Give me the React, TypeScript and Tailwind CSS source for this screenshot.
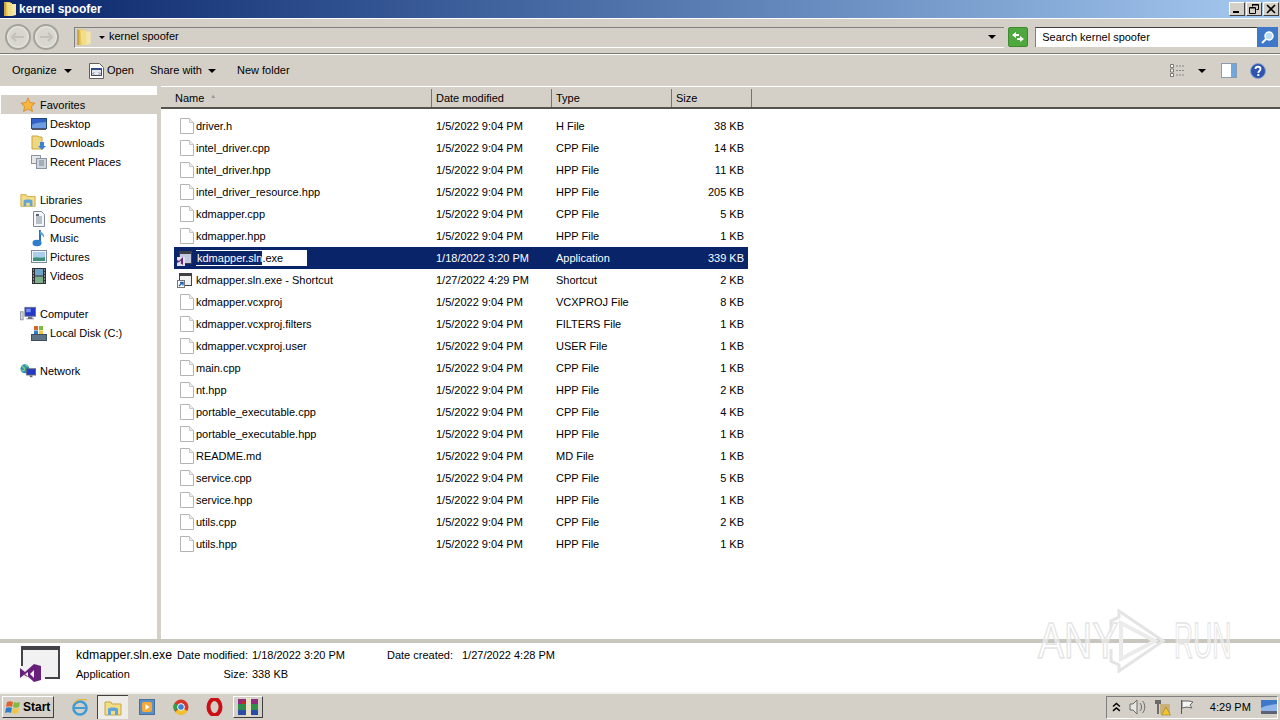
const FONT = "font-['Liberation_Sans',Arial,sans-serif]";

type FileRow = { name: string; date: string; type: string; size: string; kind?: "exe" | "lnk" };

const FILES: FileRow[] = [
  { name: "driver.h", date: "1/5/2022 9:04 PM", type: "H File", size: "38 KB" },
  { name: "intel_driver.cpp", date: "1/5/2022 9:04 PM", type: "CPP File", size: "14 KB" },
  { name: "intel_driver.hpp", date: "1/5/2022 9:04 PM", type: "HPP File", size: "11 KB" },
  { name: "intel_driver_resource.hpp", date: "1/5/2022 9:04 PM", type: "HPP File", size: "205 KB" },
  { name: "kdmapper.cpp", date: "1/5/2022 9:04 PM", type: "CPP File", size: "5 KB" },
  { name: "kdmapper.hpp", date: "1/5/2022 9:04 PM", type: "HPP File", size: "1 KB" },
  { name: "kdmapper.sln.exe", date: "1/18/2022 3:20 PM", type: "Application", size: "339 KB", kind: "exe" },
  { name: "kdmapper.sln.exe - Shortcut", date: "1/27/2022 4:29 PM", type: "Shortcut", size: "2 KB", kind: "lnk" },
  { name: "kdmapper.vcxproj", date: "1/5/2022 9:04 PM", type: "VCXPROJ File", size: "8 KB" },
  { name: "kdmapper.vcxproj.filters", date: "1/5/2022 9:04 PM", type: "FILTERS File", size: "1 KB" },
  { name: "kdmapper.vcxproj.user", date: "1/5/2022 9:04 PM", type: "USER File", size: "1 KB" },
  { name: "main.cpp", date: "1/5/2022 9:04 PM", type: "CPP File", size: "1 KB" },
  { name: "nt.hpp", date: "1/5/2022 9:04 PM", type: "HPP File", size: "2 KB" },
  { name: "portable_executable.cpp", date: "1/5/2022 9:04 PM", type: "CPP File", size: "4 KB" },
  { name: "portable_executable.hpp", date: "1/5/2022 9:04 PM", type: "HPP File", size: "1 KB" },
  { name: "README.md", date: "1/5/2022 9:04 PM", type: "MD File", size: "1 KB" },
  { name: "service.cpp", date: "1/5/2022 9:04 PM", type: "CPP File", size: "5 KB" },
  { name: "service.hpp", date: "1/5/2022 9:04 PM", type: "HPP File", size: "1 KB" },
  { name: "utils.cpp", date: "1/5/2022 9:04 PM", type: "CPP File", size: "2 KB" },
  { name: "utils.hpp", date: "1/5/2022 9:04 PM", type: "HPP File", size: "1 KB" },
];

function Folder({ size = 16 }: { size?: number }) {
  return (
    <svg width={size} height={size} viewBox="0 0 16 16">
      <path d="M1 1h6l1 1h1v13H1z" fill="#e8c860" />
      <path d="M9 3h4v11l-4 1z" fill="#f4e6a8" />
      <path d="M4 2h5v13H5z" fill="#f3de88" />
      <path d="M1 1v14h2V2z" fill="#c9a640" />
    </svg>
  );
}

function DocIcon() {
  return (
    <svg width="14" height="16" viewBox="0 0 14 16">
      <path d="M.5.5h9l4 4v11H.5z" fill="#fff" stroke="#b4b4b4" />
      <path d="M9.5.5v4h4" fill="#eee" stroke="#c8c8c8" />
    </svg>
  );
}

function WindowIcon({ kind }: { kind: "exe" | "lnk" }) {
  return (
    <svg width="16" height="16" viewBox="0 0 16 16">
      <rect x="2.5" y="1.5" width="12" height="12" fill={kind === "exe" ? "#c3c8dc" : "#f1f1f1"} stroke="#3f3f46" />
      <rect x="2" y="1" width="13" height="3" fill="#3f3f46" />
      {kind === "exe" ? (
        <>
          <rect x="0" y="7" width="8" height="9" fill="#dfe2ee" />
          <path d="M0 10l2 1 4-4v8l-4-3-2 1zM2 12.2l2 .8V10.4z" fill="#68217a" fillRule="evenodd" />
        </>
      ) : (
        <>
          <rect x="0.5" y="8.5" width="7" height="7" fill="#fff" stroke="#777" />
          <path d="M2 14l3-3M3 10.5h3v3" fill="none" stroke="#1a5fb4" strokeWidth="1.4" />
        </>
      )}
    </svg>
  );
}

function SideIcon({ name }: { name: string }) {
  switch (name) {
    case "Favorites":
      return (
        <svg width="18" height="18" viewBox="0 0 18 18">
          <path d="M9 1l2.4 5.3 5.6.6-4.2 3.8 1.2 5.6L9 13.4l-5 2.9 1.2-5.6L1 6.9l5.6-.6z" fill="#f6b73c" stroke="#d98a2a" />
        </svg>
      );
    case "Desktop":
      return (
        <svg width="16" height="16" viewBox="0 0 16 16">
          <rect x="0.5" y="2.5" width="15" height="10" fill="#2f62c4" stroke="#24477f" />
          <path d="M1 9c4-3 9-2 14-3v6H1z" fill="#6f9be0" />
          <rect x="1" y="12" width="14" height="2" fill="#4a5568" />
        </svg>
      );
    case "Downloads":
      return (
        <svg width="16" height="16" viewBox="0 0 16 16">
          <path d="M1 1h6l1 1h3v12H1z" fill="#efd77e" stroke="#c9a640" />
          <path d="M9 7h4v4h2l-4 4-4-4h2z" fill="#3b82d6" />
        </svg>
      );
    case "Recent Places":
      return (
        <svg width="16" height="16" viewBox="0 0 16 16">
          <rect x="0.5" y="1.5" width="9" height="8" fill="#e5e7eb" stroke="#8a94a0" />
          <rect x="5.5" y="4.5" width="10" height="10" fill="#cfd5dc" stroke="#8a94a0" />
          <path d="M8 7h5M8 9h5M8 11h5" stroke="#7a8490" />
        </svg>
      );
    case "Libraries":
      return (
        <svg width="18" height="16" viewBox="0 0 18 16">
          <path d="M1 2h6l1 2h9v11H1z" fill="#f2dc85" stroke="#c9a640" />
          <path d="M4 15V9c0-2 10-2 10 0v6h-3v-4H7v4z" fill="#5fa5d9" />
        </svg>
      );
    case "Documents":
      return (
        <svg width="14" height="16" viewBox="0 0 14 16">
          <path d="M1.5.5h8l3 3v12h-11z" fill="#f5f6f8" stroke="#7f8a99" />
          <path d="M4 6h6M4 8h6M4 10h6M4 12h6" stroke="#7f8a99" />
          <rect x="4" y="3" width="3" height="2" fill="#5a6778" />
        </svg>
      );
    case "Music":
      return (
        <svg width="14" height="18" viewBox="0 0 14 18">
          <path d="M8 1v12" stroke="#2a6fb8" strokeWidth="2" />
          <ellipse cx="5" cy="14" rx="4.5" ry="3.2" fill="#2f7cc8" />
          <path d="M8 1c1 3 5 3 4 8-1-3-3-3-4-4z" fill="#5aa2e0" />
        </svg>
      );
    case "Pictures":
      return (
        <svg width="16" height="14" viewBox="0 0 16 14">
          <rect x="0.5" y="0.5" width="15" height="12" fill="#f3f4f6" stroke="#7f8a99" />
          <rect x="2" y="2" width="12" height="9" fill="#a9cdea" />
          <path d="M2 8c4-2 8 1 12-1v4H2z" fill="#3f8f78" />
        </svg>
      );
    case "Videos":
      return (
        <svg width="14" height="16" viewBox="0 0 14 16">
          <rect width="14" height="16" fill="#2f3338" />
          <rect x="3" y="1" width="8" height="6.5" fill="#6fa3c7" />
          <rect x="3" y="8.5" width="8" height="6.5" fill="#7fae8b" />
          <path d="M1 2h1M1 5h1M1 8h1M1 11h1M1 14h1M12 2h1M12 5h1M12 8h1M12 11h1M12 14h1" stroke="#e5e7eb" />
        </svg>
      );
    case "Computer":
      return (
        <svg width="18" height="16" viewBox="0 0 18 16">
          <rect x="0.5" y="5.5" width="3" height="9" fill="#d8dade" stroke="#8a94a0" />
          <rect x="5.5" y="0.5" width="12" height="10" fill="#2438c8" stroke="#6b7280" />
          <path d="M7 2h5v4H7z" fill="#7b93ef" />
          <path d="M9 11h5v2h2v1H7v-1h2z" fill="#6b7280" />
        </svg>
      );
    case "Local Disk (C:)":
      return (
        <svg width="16" height="16" viewBox="0 0 16 16">
          <rect x="0.5" y="9.5" width="15" height="6" fill="#5f7487" stroke="#3f4e5c" />
          <rect x="3" y="1" width="4" height="4" fill="#e2622f" />
          <rect x="8" y="1" width="4" height="4" fill="#7fba3c" />
          <rect x="3" y="5.5" width="4" height="3.5" fill="#2f7cc8" />
          <rect x="8" y="5.5" width="4" height="3.5" fill="#f2c53d" />
        </svg>
      );
    default:
      return (
        <svg width="18" height="16" viewBox="0 0 18 16">
          <circle cx="5.5" cy="5.5" r="5" fill="#2c8fb8" />
          <path d="M2 3c2 0 3 1 3 3S3 8 2 7M6 1c1 2 3 2 4 2" stroke="#7fd07f" fill="none" strokeWidth="1.4" />
          <rect x="7.5" y="5.5" width="10" height="7" fill="#2438c8" stroke="#5b6470" />
          <path d="M11 13h3v2h-3z" fill="#5b6470" />
        </svg>
      );
  }
}

function NavRow({ name, sub, active }: { name: string; sub?: boolean; active?: boolean }) {
  return (
    <div className={`flex h-[19px] items-center pt-[1px] ${sub ? "pl-[30px] gap-[3px]" : "pl-[19px] gap-[4px]"} ${active ? "bg-[#d4d0c8]" : ""}`}>
      <span className="flex h-[17px] w-[16px] items-center justify-center overflow-visible">
        <SideIcon name={name} />
      </span>
      <span>{name}</span>
    </div>
  );
}

function Spacer() {
  return <div className="h-[19px]" />;
}

function NavPane() {
  return (
    <div className="w-[157px] shrink-0 bg-white pl-[1px] pt-[9px]">
      <NavRow name="Favorites" active />
      <NavRow name="Desktop" sub />
      <NavRow name="Downloads" sub />
      <NavRow name="Recent Places" sub />
      <Spacer />
      <NavRow name="Libraries" />
      <NavRow name="Documents" sub />
      <NavRow name="Music" sub />
      <NavRow name="Pictures" sub />
      <NavRow name="Videos" sub />
      <Spacer />
      <NavRow name="Computer" />
      <NavRow name="Local Disk (C:)" sub />
      <Spacer />
      <NavRow name="Network" />
    </div>
  );
}

function HeaderCell({ label, width, pad }: { label: string; width: string; pad: string }) {
  return (
    <div className={`flex h-full shrink-0 items-center border-r border-r-[#77746c] ${width} ${pad}`}>
      <span>{label}</span>
      {label === "Name" && <span className="mb-[3px] ml-[6px] text-[6px] text-[#9a978f]">▲</span>}
    </div>
  );
}

function Row({ file }: { file: FileRow }) {
  const selected = file.kind === "exe";
  return (
    <div className={`ml-[13px] flex h-[22px] w-[574px] items-center ${selected ? "bg-[#0a246a] text-white" : ""}`}>
      <span className={`flex shrink-0 items-center ${file.kind ? "ml-[3px] w-[19px]" : "ml-[6px] w-[16px]"}`}>
        {file.kind ? <WindowIcon kind={file.kind} /> : <DocIcon />}
      </span>
      {selected ? (
        <span className="flex h-[16px] w-[111px] shrink-0 items-center bg-white pt-[1px] text-black">
          <span className="-mt-[1px] flex h-[14px] items-center bg-[#0a246a] pl-[1px] pt-[1px] text-white">kdmapper.sln</span>
          <span>.exe</span>
        </span>
      ) : (
        <span className="w-[240px] shrink-0 whitespace-nowrap pt-[1px]">{file.name}</span>
      )}
      {selected && <span className="w-[129px] shrink-0" />}
      <span className="w-[120px] shrink-0 pt-[1px]">{file.date}</span>
      <span className="w-[120px] shrink-0 pt-[1px]">{file.type}</span>
      <span className="w-[68px] shrink-0 pt-[1px] text-right">{file.size}</span>
    </div>
  );
}

function WinButton({ glyph }: { glyph: "min" | "max" | "close" }) {
  return (
    <div className="flex h-[14px] w-[16px] items-center justify-center border border-b-[#404040] border-l-white border-r-[#404040] border-t-white bg-[#d4d0c8]">
      <svg width="10" height="10" viewBox="0 0 10 10">
        {glyph === "min" && <rect x="1" y="7" width="6" height="2" fill="#000" />}
        {glyph === "max" && <path d="M3.5 2.5V.5h6v5h-2M.5 3.5h6v6h-6zM3 1h6M1 4h5" fill="none" stroke="#000" />}
        {glyph === "close" && <path d="M1 1l8 8M9 1L1 9" stroke="#000" strokeWidth="1.6" />}
      </svg>
    </div>
  );
}

function RoundNav({ dir }: { dir: "left" | "right" }) {
  return (
    <div className="flex h-[26px] w-[26px] items-center justify-center rounded-full border-2 border-[#a5a29b] bg-[#d9d6cf] shadow-[inset_0_0_3px_#fff]">
      <svg width="14" height="10" viewBox="0 0 14 10">
        <path d={dir === "left" ? "M1 5h12M5 1L1 5l4 4" : "M1 5h12M9 1l4 4-4 4"} fill="none" stroke="#c4c1ba" strokeWidth="2" />
      </svg>
    </div>
  );
}

function Caret() {
  return <span className="block h-0 w-0 shrink-0 border-l-[4px] border-r-[4px] border-t-[4px] border-l-transparent border-r-transparent border-t-black" />;
}

function AddressBar() {
  return (
    <div className="mt-[2px] flex h-[32px] items-center pl-[5px] pr-[2px]">
      <RoundNav dir="left" />
      <div className="w-[2px]" />
      <RoundNav dir="right" />
      <div className="ml-[15px] flex h-[21px] w-[931px] items-center border-b border-l border-t border-b-white border-l-[#808080] border-t-[#808080]">
        <span className="ml-[1px] flex"><Folder size={18} /></span>
        <span className="ml-[5px] mr-[4px] block h-0 w-0 border-l-[3px] border-r-[3px] border-t-[3px] border-l-transparent border-r-transparent border-t-black" />
        <span className="-mt-[1px]">kernel spoofer</span>
        <span className="ml-auto mr-[8px] flex"><Caret /></span>
      </div>
      <div className="ml-[4px] flex h-[20px] w-[20px] items-center justify-center rounded-[2px] border border-[#3d8b2f] bg-[#4fa83d]">
        <svg width="14" height="12" viewBox="0 0 14 12">
          <path d="M1 4l4-3v2h3v2H5v2zM13 8L9 11V9H6V7h3V5z" fill="#fff" />
        </svg>
      </div>
      <div className="ml-[7px] flex h-[20px] w-[222px] items-center border-l border-t border-l-[#808080] border-t-[#404040] bg-white pl-[6px]">
        Search kernel spoofer
      </div>
      <div className="flex h-[20px] w-[21px] items-center justify-center bg-[#3f77c9]">
        <svg width="15" height="15" viewBox="0 0 15 15">
          <circle cx="9" cy="6" r="4" fill="#bcdcf5" stroke="#fff" strokeWidth="1.5" />
          <path d="M6 9l-4 4" stroke="#fff" strokeWidth="2" />
        </svg>
      </div>
    </div>
  );
}

function Toolbar() {
  return (
    <div className="flex h-[32px] items-center border-t border-t-white pl-[12px] pr-[14px]">
      <span className="w-[44px] whitespace-nowrap">Organize</span>
      <span className="ml-[8px] flex"><Caret /></span>
      <span className="ml-[17px] flex">
        <svg width="15" height="16" viewBox="0 0 15 16">
          <path d="M.5.5h10l4 4v11H.5z" fill="#fff" stroke="#606060" />
          <rect x="2.5" y="5.5" width="10" height="7" fill="#e5e7eb" stroke="#404a5a" />
          <rect x="2" y="5" width="11" height="2" fill="#2f4d8a" />
          <path d="M5 9.5l-1 1 1 1M10 9.5l1 1-1 1" stroke="#2f4d8a" fill="none" />
        </svg>
      </span>
      <span className="ml-[3px] w-[26px]">Open</span>
      <span className="ml-[17px] w-[51px] whitespace-nowrap">Share with</span>
      <span className="ml-[7px] flex"><Caret /></span>
      <span className="ml-[21px] whitespace-nowrap">New folder</span>
      <span className="ml-auto flex">
        <svg width="16" height="13" viewBox="0 0 16 13">
          <path d="M.5.5h3v3h-3zM.5 5h3v3h-3zM.5 9.5h3v3h-3z" fill="#fff" stroke="#7a776f" />
          <path d="M6 2h9M6 6.5h9M6 11h9" stroke="#8a8780" strokeDasharray="2 1" />
        </svg>
      </span>
      <span className="ml-[12px] flex"><Caret /></span>
      <span className="ml-[15px] flex">
        <svg width="16" height="15" viewBox="0 0 16 15">
          <rect x="0.5" y="0.5" width="15" height="14" fill="#fff" stroke="#8a9bb0" />
          <rect x="10" y="1" width="5" height="13" fill="#6fa8dc" />
        </svg>
      </span>
      <span className="ml-[13px] flex">
        <svg width="16" height="16" viewBox="0 0 16 16">
          <circle cx="8" cy="8" r="7.5" fill="#2c54b0" stroke="#8fa4cf" />
          <path d="M5.5 6c0-3 5-3 5 0 0 2-2.2 2-2.2 4" fill="none" stroke="#fff" strokeWidth="1.8" />
          <rect x="7.3" y="11" width="2" height="2" fill="#fff" />
        </svg>
      </span>
    </div>
  );
}

function FileList() {
  return (
    <div className="min-w-0 flex-1 bg-white">
      <div className="flex h-[23px] items-center border-b-2 border-t border-b-[#55534d] border-t-white bg-[#d4d0c8] pt-[2px]">
        <HeaderCell label="Name" width="w-[271px]" pad="pl-[14px]" />
        <HeaderCell label="Date modified" width="w-[120px]" pad="pl-[4px]" />
        <HeaderCell label="Type" width="w-[120px]" pad="pl-[4px]" />
        <HeaderCell label="Size" width="w-[80px]" pad="pl-[4px]" />
      </div>
      <div className="pt-[6px]">
        {FILES.map((file) => (
          <Row key={file.name} file={file} />
        ))}
      </div>
    </div>
  );
}

function DetailsPane() {
  return (
    <div className="flex h-[53px] shrink-0 border-t-[4px] border-t-[#c9c6be] bg-white">
      <span className="ml-[20px] mt-[3px] flex shrink-0 self-start">
        <svg width="40" height="36" viewBox="0 0 40 36">
          <rect x="1.5" y="1.5" width="38" height="31" fill="#f1f1f1" />
          <rect x="1" y="0" width="39" height="4" fill="#424248" />
          <rect x="1" y="0" width="2" height="20" fill="#424248" />
          <rect x="38" y="0" width="2" height="33" fill="#424248" />
          <rect x="25" y="31" width="15" height="2" fill="#424248" />
          <path d="M0 22l5 4 9-8 7 2v14l-7 2-9-8-5 4zM4 29l4 2v-5zM14 24l-4 4 4 4z" fill="#68217a" fillRule="evenodd" />
        </svg>
      </span>
      <div className="ml-[16px] w-[101px] shrink-0 pt-[3px]">
        <div className="h-[19px] whitespace-nowrap text-[12.25px] leading-[19px]">kdmapper.sln.exe</div>
        <div className="h-[19px] leading-[19px]">Application</div>
      </div>
      <div className="w-[75px] shrink-0 pt-[3px] text-right">
        <div className="h-[19px] whitespace-nowrap pr-[4px] leading-[19px]">Date modified:</div>
        <div className="h-[19px] pr-[4px] leading-[19px]">Size:</div>
      </div>
      <div className="w-[135px] shrink-0 pt-[3px]">
        <div className="h-[19px] leading-[19px]">1/18/2022 3:20 PM</div>
        <div className="h-[19px] leading-[19px]">338 KB</div>
      </div>
      <div className="w-[75px] shrink-0 pt-[3px]">
        <div className="h-[19px] whitespace-nowrap leading-[19px]">Date created:</div>
      </div>
      <div className="pt-[3px]">
        <div className="h-[19px] leading-[19px]">1/27/2022 4:28 PM</div>
      </div>
    </div>
  );
}

function StartFlag() {
  return (
    <svg width="17" height="16" viewBox="0 0 17 16">
      <path d="M2 3c2-1 4-1 6 0l-1 5C5 7 3 7 1 8z" fill="#e2622f" />
      <path d="M9 3c2 1 4 1 6 0l-1 5c-2 1-4 1-6 0z" fill="#7fba3c" />
      <path d="M1 9c2-1 4-1 6 0l-1 5c-2-1-4-1-6 0z" fill="#2f7cc8" />
      <path d="M8 9c2 1 4 1 6 0l-1 5c-2 1-4 1-6 0z" fill="#f2c53d" />
    </svg>
  );
}

function Taskbar() {
  return (
    <div className="flex h-[28px] shrink-0 items-center border-t-2 border-t-[#f4f3ef] bg-[#d4d0c8] px-[2px]">
      <div className="flex h-[22px] w-[52px] items-center gap-[1px] border border-b-[#404040] border-l-white border-r-[#404040] border-t-white pl-[2px] text-[12px] font-bold">
        <StartFlag />
        <span>Start</span>
      </div>
      {/* quick launch */}
      <span className="ml-[18px] flex">
        <svg width="16" height="17" viewBox="0 0 16 17">
          <ellipse cx="8" cy="9" rx="6.5" ry="6.5" fill="none" stroke="#3f9ad6" strokeWidth="2.6" />
          <path d="M3 9h10" stroke="#3f9ad6" strokeWidth="2" />
          <path d="M2 4c3-4 9-4 13-3" fill="none" stroke="#e6b93c" strokeWidth="1.4" />
        </svg>
      </span>
      <div className="ml-[9px] flex h-[24px] w-[31px] items-center justify-center border-l border-t border-l-[#404040] border-t-[#404040] bg-[#eeece6]">
        <svg width="18" height="16" viewBox="0 0 18 16">
          <path d="M1 2h6l1 2h9v11H1z" fill="#f2dc85" stroke="#c9a640" />
          <path d="M4 15V9c0-2 10-2 10 0v6h-3v-4H7v4z" fill="#5fa5d9" />
        </svg>
      </div>
      <span className="ml-[11px] flex">
        <svg width="16" height="16" viewBox="0 0 16 16">
          <rect x="0.5" y="0.5" width="15" height="15" fill="#5c8fc4" stroke="#466f9c" />
          <rect x="3" y="3" width="10" height="10" rx="2" fill="#f4a93a" />
          <path d="M6.5 5l4 3-4 3z" fill="#fff" />
        </svg>
      </span>
      <span className="ml-[18px] flex">
        <svg width="16" height="16" viewBox="0 0 16 16">
          <circle cx="8" cy="8" r="7.5" fill="#d6372b" />
          <path d="M8 8L1.5 12A7.5 7.5 0 0 1 1.5 4z" fill="#3d9a45" />
          <path d="M8 8l6.5 4A7.5 7.5 0 0 1 2 13z" fill="#f0c02f" />
          <circle cx="8" cy="8" r="3.4" fill="#3e7fd6" stroke="#fff" />
        </svg>
      </span>
      <span className="ml-[17px] flex">
        <svg width="17" height="18" viewBox="0 0 17 18">
          <ellipse cx="8.5" cy="9" rx="6" ry="8" fill="none" stroke="#cc0f16" strokeWidth="4" />
        </svg>
      </span>
      <div className="ml-[10px] flex h-[22px] w-[30px] items-center justify-center border border-b-[#404040] border-l-white border-r-[#404040] border-t-white">
        <svg width="20" height="18" viewBox="0 0 20 18">
          <rect y="1" width="20" height="5" fill="#8e2d7e" />
          <rect y="6" width="20" height="6" fill="#2f8c4c" />
          <rect y="12" width="20" height="5" fill="#2c4aa8" />
          <rect x="8" width="5" height="18" fill="#e9e3c9" />
          <rect x="4" y="3" width="3" height="3" fill="#c62828" />
        </svg>
      </div>
      {/* tray */}
      <div className="ml-auto flex h-[23px] w-[172px] items-center border border-b-white border-l-[#808080] border-r-white border-t-[#808080] pl-[5px]">
        <svg width="9" height="10" viewBox="0 0 9 10">
          <path d="M1 4.5l3.5-3 3.5 3M1 9l3.5-3L8 9" fill="none" stroke="#000" strokeWidth="1.5" />
        </svg>
        <span className="ml-[8px] flex">
          <svg width="17" height="16" viewBox="0 0 17 16">
            <path d="M1 5h3l4-4v14l-4-4H1z" fill="#e8e6e0" stroke="#6a6a6a" />
            <path d="M11 4c2 2 2 6 0 8M13.5 2c3 3 3 9 0 12" fill="none" stroke="#6a6a6a" />
          </svg>
        </span>
        <span className="ml-[8px] flex">
          <svg width="17" height="17" viewBox="0 0 17 17">
            <rect x="1" y="1" width="6" height="4" fill="#6a6a6a" />
            <rect x="3" y="5" width="2" height="10" fill="#6a6a6a" />
            <rect x="6" y="5" width="10" height="10" fill="#c8b27a" />
            <path d="M12 8l4.5 8h-9z" fill="#f4c430" stroke="#8a6d10" strokeWidth="0.5" />
          </svg>
        </span>
        <span className="ml-[8px] flex">
          <svg width="16" height="16" viewBox="0 0 16 16">
            <path d="M2.5 1v14" stroke="#555" />
            <path d="M3 2h7l4 1-3 3 2 3-5-1-5 1z" fill="#f5f5f5" stroke="#666" />
          </svg>
        </span>
        <span className="ml-[15px] w-[47px] whitespace-nowrap">4:29 PM</span>
        <span className="ml-[5px] flex">
          <svg width="16" height="14" viewBox="0 0 16 14">
            <rect width="16" height="11" fill="#3f78c8" />
            <path d="M0 8c5-3 10-3 16-4v7H0z" fill="#8fb6ea" />
            <rect y="11" width="16" height="3" fill="#5b6470" />
          </svg>
        </span>
      </div>
    </div>
  );
}

function Watermark() {
  return (
    <div className="pointer-events-none absolute left-[1038px] top-[609px] flex h-[64px] items-center font-['Liberation_Sans',Arial,sans-serif] text-[50px] leading-none text-white/50 [-webkit-text-stroke:1.5px_#e4e4e4]">
      <span className="w-[71px] origin-left scale-x-[0.78]">ANY</span>
      <svg width="56" height="64" viewBox="0 0 56 64" className="shrink-0">
        <path d="M2 24V12L10 8V2l44 30-44 30v-6l-8-4V40" fill="none" stroke="#e4e4e4" strokeWidth="3" />
        <path d="M12 14l34 18-34 18z" fill="none" stroke="#ebebeb" strokeWidth="4" />
      </svg>
      <span className="ml-[9px] w-[58px] origin-left scale-x-[0.53]">RUN</span>
    </div>
  );
}

export default function App() {
  return (
    <div className={`relative flex h-[720px] w-[1280px] flex-col overflow-hidden bg-[#d4d0c8] text-[11px] text-black ${FONT}`}>
      {/* title bar */}
      <div className="flex h-[18px] shrink-0 items-center bg-gradient-to-r from-[#0a246a] to-[#a6caf0] pl-[3px] pr-[1px]">
        <Folder />
        <span className="text-[12px] font-bold text-white">kernel spoofer</span>
        <div className="ml-auto flex gap-[1px]">
          <WinButton glyph="min" />
          <WinButton glyph="max" />
          <WinButton glyph="close" />
        </div>
      </div>
      {/* address bar */}
      <div className="h-[36px] shrink-0 border-b border-t border-b-[#7c7972] border-t-white">
        <AddressBar />
      </div>
      <Toolbar />
      {/* main */}
      <div className="flex min-h-0 flex-1">
        <NavPane />
        <div className="w-[4px] shrink-0 bg-[#d4d0c8]" />
        <FileList />
      </div>
      <DetailsPane />
      <Taskbar />
      <Watermark />
    </div>
  );
}
